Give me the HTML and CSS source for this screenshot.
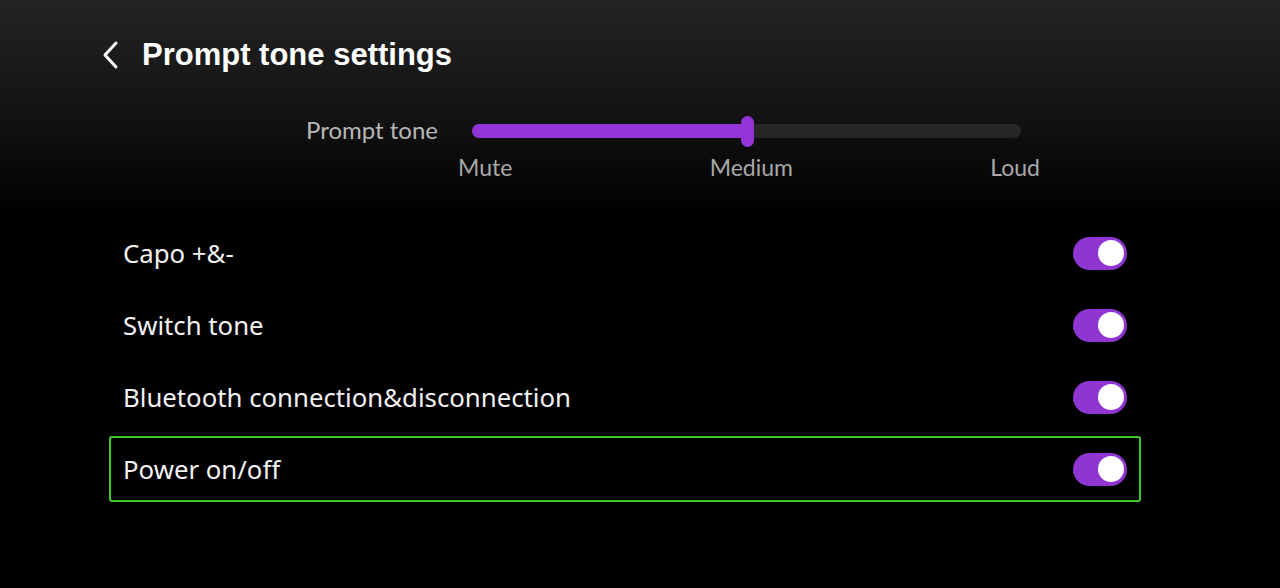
FILE: index.html
```html
<!DOCTYPE html>
<html>
<head>
<meta charset="utf-8">
<link rel="stylesheet" href="styles.css">
</head>
<body>
<div class="page">
  <header class="header">
    <svg class="back" width="18" height="30" viewBox="0 0 18 30"><path d="M15 3 L4 15 L15 27" fill="none" stroke="#fff" stroke-width="3" stroke-linecap="round" stroke-linejoin="round"/></svg>
    <h1 class="title">Prompt tone settings</h1>
  </header>
  <section class="volume">
    <div class="vol-label">Prompt tone</div>
    <div class="track">
      <div class="fill" style="width:50%"></div>
      <div class="thumb" style="left:50%"></div>
    </div>
    <div class="scale">
      <span>Mute</span><span>Medium</span><span>Loud</span>
    </div>
  </section>
  <section class="list">
    <div class="row"><span class="row-text">Capo +&amp;-</span><span class="toggle on"><span class="knob"></span></span></div>
    <div class="row"><span class="row-text">Switch tone</span><span class="toggle on"><span class="knob"></span></span></div>
    <div class="row"><span class="row-text">Bluetooth connection&amp;disconnection</span><span class="toggle on"><span class="knob"></span></span></div>
    <div class="row focused"><span class="row-text">Power on/off</span><span class="toggle on"><span class="knob"></span></span></div>
  </section>
</div>
</body>
</html>
```
FILE: styles.css
```css
html, body {
  margin: 0;
  padding: 0;
}
body {
  width: 1280px;
  height: 588px;
  overflow: hidden;
  background: linear-gradient(180deg, #232323 0px, #121212 120px, #000 215px, #000 100%);
  font-family: "Noto Sans", sans-serif;
  color: #fff;
}
.page {
  display: flex;
  flex-direction: column;
}
.header {
  display: flex;
  align-items: center;
  height: 108px;
  padding-left: 101px;
  padding-top: 2px;
  box-sizing: border-box;
}
.back {
  display: block;
}
.title {
  margin: 0 0 0 23px;
  font-family: "Liberation Sans", Arial, sans-serif;
  font-weight: 700;
  font-size: 31px;
  color: #fff;
}
.volume {
  display: grid;
  grid-template-columns: 160px 549px;
  column-gap: 34px;
  align-items: center;
  margin-left: 278px;
}
.vol-label {
  text-align: right;
  font-family: "Lato", sans-serif;
  font-size: 24px;
  color: #b8b8b8;
  height: 46px;
  line-height: 44px;
}
.track {
  position: relative;
  height: 14px;
  border-radius: 7px;
  background: #262626;
}
.fill {
  height: 100%;
  border-radius: 7px 0 0 7px;
  background: #9234d8;
}
.thumb {
  position: absolute;
  top: -8px;
  width: 13px;
  height: 31px;
  margin-left: -6px;
  border-radius: 7px;
  background: #9234d8;
}
.scale {
  grid-column: 2;
  display: flex;
  justify-content: space-between;
  width: 582px;
  margin-left: -14px;
  font-family: "Lato", sans-serif;
  font-size: 23px;
  color: #a8a8a8;
  line-height: 26px;
}
.list {
  display: flex;
  flex-direction: column;
  gap: 6px;
  width: 1032px;
  margin-left: 109px;
  margin-top: 40px;
}
.row {
  display: flex;
  align-items: center;
  justify-content: space-between;
  height: 66px;
  box-sizing: border-box;
  padding: 0 14px;
  border: 2px solid transparent;
  border-radius: 3px;
}
.row.focused {
  border-color: #3fc62b;
}
.row-text {
  font-size: 25.75px;
  color: #f2f2f2;
  margin-left: -2px;
}
.toggle {
  position: relative;
  display: block;
  width: 54px;
  height: 33px;
  border-radius: 17px;
  background: #8e35d2;
  margin-right: -2px;
}
.knob {
  position: absolute;
  right: 3px;
  top: 3.5px;
  width: 26px;
  height: 26px;
  border-radius: 50%;
  background: #fff;
}
```
